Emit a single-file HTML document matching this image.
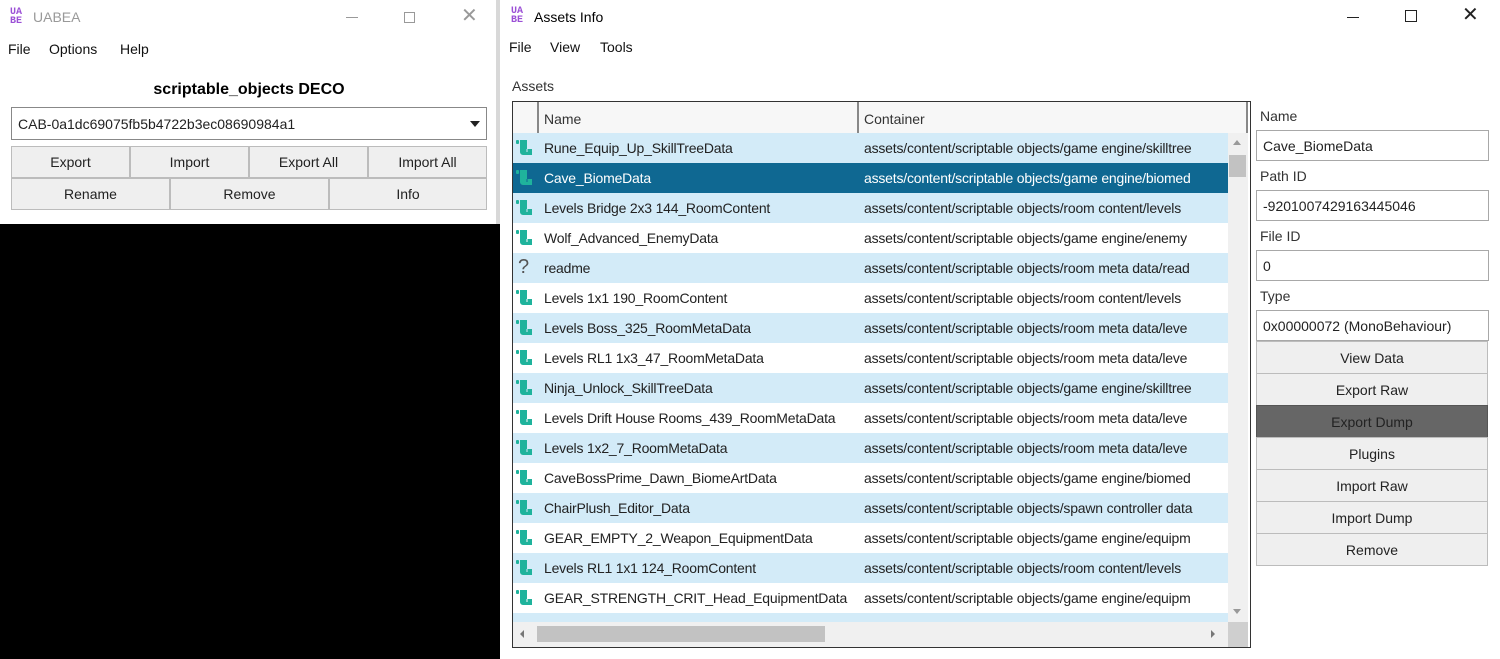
<!DOCTYPE html>
<html><head><meta charset="utf-8"><style>
*{margin:0;padding:0;box-sizing:border-box}
body{width:1500px;height:659px;background:#000;position:relative;overflow:hidden;font-family:"Liberation Sans",sans-serif;font-size:14px;color:#111}
.a{position:absolute;white-space:nowrap}
.btn{position:absolute;background:#efefef;border:1px solid #bcbcbc;display:flex;align-items:center;justify-content:center;font-size:14px;color:#222}
.tb{position:absolute;background:#fff;border:1px solid #a8a8a8;padding-left:6px;display:flex;align-items:center;font-size:14px;color:#222}
.row{position:absolute;left:513px;width:715px;height:30px;font-size:14px;color:#222;letter-spacing:-0.2px}
.row span{position:absolute;top:7px}
.logo{position:absolute;font-size:10px;line-height:9px;font-weight:bold;color:#9b4fd6;letter-spacing:0px;font-family:"Liberation Mono",monospace}
</style></head><body>
<div class="a" style="left:0;top:0;width:496px;height:224px;background:#fff"></div>
<div class="a" style="left:496px;top:0;width:4px;height:224px;background:#d8d8d8"></div>
<div class="logo" style="left:10px;top:8px">UA<br>BE</div>
<div class="a" style="left:33px;top:9px;color:#999;font-size:14px">UABEA</div>
<div class="a" style="left:346px;top:17px;width:12px;height:1px;background:#999"></div>
<div class="a" style="left:404px;top:12px;width:11px;height:11px;border:1px solid #999"></div>
<div class="a" style="left:461px;top:3px;color:#999;font-size:20px;font-weight:100">✕</div>
<div class="a" style="left:8px;top:41px">File</div>
<div class="a" style="left:49px;top:41px">Options</div>
<div class="a" style="left:120px;top:41px">Help</div>
<div class="a" style="left:0;width:498px;top:81px;text-align:center;font-weight:bold;font-size:16px;color:#000">scriptable_objects DECO</div>
<div class="tb" style="left:11px;top:107px;width:476px;height:33px;border-color:#888">CAB-0a1dc69075fb5b4722b3ec08690984a1</div>
<div class="a" style="left:470px;top:121px;border-left:5px solid transparent;border-right:5px solid transparent;border-top:6px solid #222"></div>
<div class="btn" style="left:11px;top:146px;width:119px;height:32px">Export</div>
<div class="btn" style="left:130px;top:146px;width:119px;height:32px">Import</div>
<div class="btn" style="left:249px;top:146px;width:119px;height:32px">Export All</div>
<div class="btn" style="left:368px;top:146px;width:119px;height:32px">Import All</div>
<div class="btn" style="left:11px;top:178px;width:159px;height:32px">Rename</div>
<div class="btn" style="left:170px;top:178px;width:159px;height:32px">Remove</div>
<div class="btn" style="left:329px;top:178px;width:158px;height:32px">Info</div>

<div class="a" style="left:500px;top:0;width:1000px;height:659px;background:#fff"></div>
<div class="logo" style="left:511px;top:7px">UA<br>BE</div>
<div class="a" style="left:534px;top:9px;color:#000">Assets Info</div>
<div class="a" style="left:1347px;top:17px;width:12px;height:1px;background:#222"></div>
<div class="a" style="left:1405px;top:10px;width:12px;height:12px;border:1px solid #222"></div>
<div class="a" style="left:1462px;top:2px;color:#222;font-size:20px">✕</div>
<div class="a" style="left:509px;top:39px">File</div>
<div class="a" style="left:550px;top:39px">View</div>
<div class="a" style="left:600px;top:39px">Tools</div>
<div class="a" style="left:512px;top:78px;color:#333">Assets</div>

<div class="a" style="left:512px;top:101px;width:739px;height:547px;border:1px solid #333;background:#fff"></div>
<div class="a" style="left:513px;top:102px;width:735px;height:31px;background:#f7f7f7"></div>
<div class="a" style="left:537px;top:102px;width:2px;height:31px;background:#888"></div>
<div class="a" style="left:857px;top:102px;width:2px;height:31px;background:#888"></div>
<div class="a" style="left:1246px;top:102px;width:2px;height:31px;background:#888"></div>
<div class="a" style="left:544px;top:111px;color:#333">Name</div>
<div class="a" style="left:864px;top:111px;color:#333">Container</div>

<div id="rows"></div>
<script>
const d=[["Rune_Equip_Up_SkillTreeData","game engine/skilltree"],["Cave_BiomeData","game engine/biomed"],["Levels Bridge 2x3 144_RoomContent","room content/levels"],["Wolf_Advanced_EnemyData","game engine/enemy"],["readme","room meta data/read"],["Levels 1x1 190_RoomContent","room content/levels"],["Levels Boss_325_RoomMetaData","room meta data/leve"],["Levels RL1 1x3_47_RoomMetaData","room meta data/leve"],["Ninja_Unlock_SkillTreeData","game engine/skilltree"],["Levels Drift House Rooms_439_RoomMetaData","room meta data/leve"],["Levels 1x2_7_RoomMetaData","room meta data/leve"],["CaveBossPrime_Dawn_BiomeArtData","game engine/biomed"],["ChairPlush_Editor_Data","spawn controller data"],["GEAR_EMPTY_2_Weapon_EquipmentData","game engine/equipm"],["Levels RL1 1x1 124_RoomContent","room content/levels"],["GEAR_STRENGTH_CRIT_Head_EquipmentData","game engine/equipm"],["",""]];
let h="";
d.forEach((r,i)=>{const y=133+i*30;const sel=i==1;const bg=sel?"#0f6892":(i%2==0?"#d3ebf8":"#fff");const c=sel?"#fff":"#222";
const hh=i==16?9:30;
const icon=i==4?`<span style="left:5px;top:3px;font-size:20px;color:#555">?</span>`:`<svg style="position:absolute;left:3px;top:7px" width="17" height="16" viewBox="0 0 17 16"><rect x="0" y="0" width="3" height="4" rx="1" fill="#1fb39c"/><path d="M4 0h7v9h5v6H7a3 3 0 0 1-3-3z" fill="#1fb39c"/><path d="M11 9v3" stroke="${bg}" stroke-width="1"/></svg>`;
h+=`<div class="row" style="top:${y}px;height:${hh}px;background:${bg};color:${c};overflow:hidden">${i<16?icon:""}<span style="left:31px">${r[0]}</span><span style="left:351px;width:362px;overflow:hidden">${r[1]?"assets/content/scriptable objects/"+r[1]:""}</span></div>`;});
document.getElementById("rows").innerHTML=h;
</script>
<div class="a" style="left:1228px;top:133px;width:20px;height:489px;background:#f0f0f0"></div>
<div class="a" style="left:1229px;top:155px;width:17px;height:22px;background:#c2c2c2"></div>
<div class="a" style="left:1233px;top:140px;border-left:4px solid transparent;border-right:4px solid transparent;border-bottom:5px solid #999"></div>
<div class="a" style="left:1233px;top:609px;border-left:4px solid transparent;border-right:4px solid transparent;border-top:5px solid #999"></div>
<div class="a" style="left:513px;top:622px;width:715px;height:25px;background:#f0f0f0"></div>
<div class="a" style="left:537px;top:626px;width:288px;height:16px;background:#c2c2c2"></div>
<div class="a" style="left:520px;top:630px;border-top:4px solid transparent;border-bottom:4px solid transparent;border-right:4px solid #777"></div>
<div class="a" style="left:1211px;top:630px;border-top:4px solid transparent;border-bottom:4px solid transparent;border-left:4px solid #777"></div>
<div class="a" style="left:1228px;top:622px;width:20px;height:25px;background:#cfcfcf"></div>

<div class="a" style="left:1260px;top:108px;color:#333">Name</div>
<div class="tb" style="left:1256px;top:130px;width:233px;height:31px">Cave_BiomeData</div>
<div class="a" style="left:1260px;top:168px;color:#333">Path ID</div>
<div class="tb" style="left:1256px;top:190px;width:233px;height:31px">-9201007429163445046</div>
<div class="a" style="left:1260px;top:228px;color:#333">File ID</div>
<div class="tb" style="left:1256px;top:250px;width:233px;height:31px">0</div>
<div class="a" style="left:1260px;top:288px;color:#333">Type</div>
<div class="tb" style="left:1256px;top:310px;width:233px;height:31px">0x00000072 (MonoBehaviour)</div>
<div class="btn" style="left:1256px;top:341px;width:232px;height:33px">View Data</div>
<div class="btn" style="left:1256px;top:373px;width:232px;height:33px">Export Raw</div>
<div class="btn" style="left:1256px;top:405px;width:232px;height:33px;background:#666;border-color:#555;color:#222">Export Dump</div>
<div class="btn" style="left:1256px;top:437px;width:232px;height:33px">Plugins</div>
<div class="btn" style="left:1256px;top:469px;width:232px;height:33px">Import Raw</div>
<div class="btn" style="left:1256px;top:501px;width:232px;height:33px">Import Dump</div>
<div class="btn" style="left:1256px;top:533px;width:232px;height:33px">Remove</div>
</body></html>
